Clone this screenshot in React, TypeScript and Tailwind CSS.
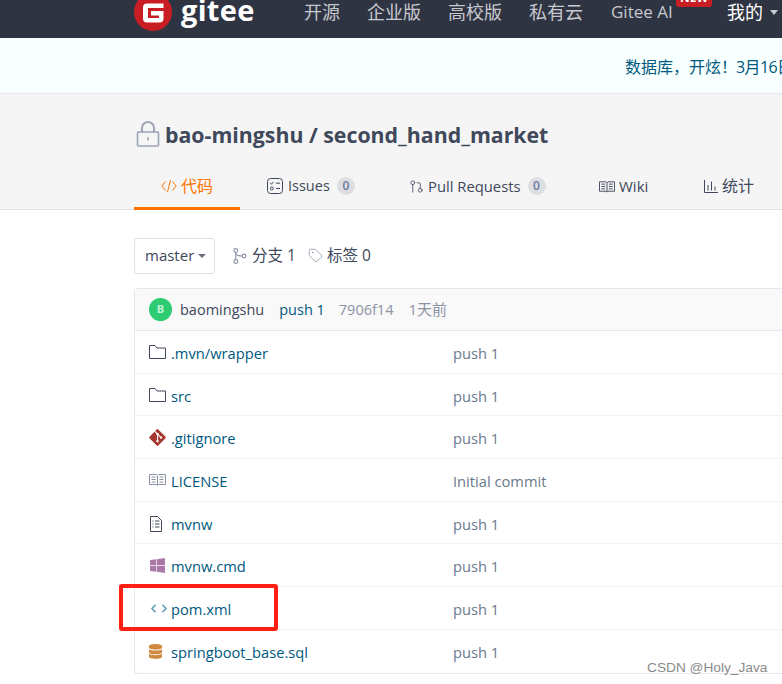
import { ChevronLeft, ChevronRight, GitPullRequest, Tag } from "lucide-react";
import { FaDatabase, FaGitAlt, FaWindows } from "react-icons/fa";
import type { ReactNode } from "react";

const FONT = "font-['Open_Sans','Noto_Sans_CJK_SC',sans-serif]";

const navItems = [
  { label: "开源", cls: "w-[63px]" },
  { label: "企业版", cls: "w-[81px]" },
  { label: "高校版", cls: "w-[81px]" },
  { label: "私有云", cls: "w-[82px]" },
];

function GiteeLogo() {
  return (
    <svg viewBox="0 0 38 38" className="w-[38px] h-[38px] shrink-0">
      <circle cx="19" cy="19" r="19" fill="#c71d23" />
      <path d="M29.5 10.5H13a4 4 0 0 0-4 4v11a4 4 0 0 0 4 4h12.5a4 4 0 0 0 4-4v-7.500H17v4.500h8v2.500H14V15h15.500z" fill="#fff" />
    </svg>
  );
}

function LockIcon() {
  return (
    <svg viewBox="0 0 24 26" className="w-[24px] h-[26px] shrink-0" fill="none" stroke="#9ba3b4" strokeWidth="1.6">
      <rect x="1.5" y="11" width="21" height="14" rx="1" fill="#f5f5f5" />
      <path d="M6 11V7a6 6 0 0 1 12 0v4" strokeWidth="2" />
      <path d="M12 16v3.5" strokeWidth="1.6" />
    </svg>
  );
}

function IssuesIcon() {
  return (
    <svg viewBox="0 0 16 16" className="w-[16px] h-[16px] shrink-0" fill="none" stroke="#40485b" strokeWidth="1">
      <rect x="0.5" y="0.5" width="15" height="15" rx="3" />
      <path d="M3.2 5l1.2 1.2L6.4 4M9 5.2h4M9 10.5h4" />
      <circle cx="4.8" cy="10.5" r="1.5" />
    </svg>
  );
}

function CodeSlash() {
  return (
    <svg viewBox="0 0 16 14" className="w-[16px] h-[14px] shrink-0" fill="none" stroke="#fe7300" strokeWidth="1">
      <path d="M4.5 2.500L0.8 7l3.700 4.500M11.500 2.500L15.200 7l-3.700 4.500M9.500 1L6.500 13" />
    </svg>
  );
}

function ListFile() {
  return (
    <svg viewBox="0 0 13 16" className="w-[13px] h-[16px]" fill="none" stroke="#40485b" strokeWidth="1">
      <path d="M1.500.5h7l4 4v11h-11z" />
      <path d="M3.500 5h1M6 5h4.500M3.500 8h1M6 8h4.500M3.500 11h1M6 11h4.500" />
    </svg>
  );
}

function FolderIcon() {
  return (
    <svg viewBox="0 0 17 14" className="w-[17px] h-[14px] -mt-[2px]" fill="none" stroke="#40485b" strokeWidth="1">
      <path d="M.5 13.500V.5h5.500l2 2.500h8.500v10.500z" />
    </svg>
  );
}

function BookIcon({ color, cls }: { color: string; cls: string }) {
  return (
    <svg viewBox="0 0 17 13" className={cls} fill="none" stroke={color} strokeWidth="1">
      <path d="M.5 1.500h7l1 1 1-1h7v10h-7l-1 1-1-1h-7zM8.500 2.500v9.500" />
      <path d="M2.500 4h4M2.500 6.500h4M2.500 9h4M10.500 4h4M10.500 6.500h4M10.500 9h4" />
    </svg>
  );
}

function BranchIcon() {
  return (
    <svg viewBox="0 0 14 16" className="w-[14px] h-[16px] ml-[18px] shrink-0" fill="none" stroke="#8c92a4" strokeWidth="1.100">
      <circle cx="2.800" cy="2.500" r="1.900" />
      <circle cx="2.800" cy="13.500" r="1.900" />
      <circle cx="11" cy="8" r="1.900" />
      <path d="M2.800 4.400v7.200M2.800 5c.5 2.500 3.500 3 6.300 3" />
    </svg>
  );
}

function ChartIcon() {
  return (
    <svg viewBox="0 0 14 14" className="w-[14px] h-[14px] shrink-0" fill="none" stroke="#40485b" strokeWidth="1">
      <path d="M.5 1v12.500H14M4 6v5.500M7.500 2.500v9M11 7.500v4" />
    </svg>
  );
}

function Tab({ icon, label, count, cls, active, labelCls }: { icon: ReactNode; label: string; count?: number; cls: string; active?: boolean; labelCls?: string }) {
  return (
    <div className={`${cls} h-[46px] flex items-center gap-[4px] shrink-0 text-[15px] ${active ? "justify-center border-b-[3px] border-[#fe7300] text-[#fe7300]" : "text-[#40485b] pb-[2px]"}`}>
      {icon}
      <span className={labelCls}>{label}</span>
      {count !== undefined && (
        <span className="ml-[3px] w-[18px] h-[18px] rounded-full bg-[#dcdee2] text-[#6a7a9c] text-[12px] font-semibold flex items-center justify-center">{count}</span>
      )}
    </div>
  );
}

const rows: { name: string; msg: string; icon: ReactNode }[] = [
  { name: ".mvn/wrapper", msg: "push 1", icon: <FolderIcon /> },
  { name: "src", msg: "push 1", icon: <FolderIcon /> },
  { name: ".gitignore", msg: "push 1", icon: <FaGitAlt size={19} color="#a5372e" className="-mt-[1px] -ml-[1px]" /> },
  { name: "LICENSE", msg: "Initial commit", icon: <BookIcon color="#8c92a4" cls="w-[17px] h-[13px] -mt-[2px]" /> },
  { name: "mvnw", msg: "push 1", icon: <ListFile /> },
  { name: "mvnw.cmd", msg: "push 1", icon: <FaWindows size={17} color="#a978a5" className="-mt-[1px]" /> },
  {
    name: "pom.xml",
    msg: "push 1",
    icon: (
      <span className="flex text-[#5f9ebd] -ml-[2px]">
        <ChevronLeft size={13} strokeWidth={3} className="-mr-[2px]" />
        <ChevronRight size={13} strokeWidth={3} />
      </span>
    ),
  },
  { name: "springboot_base.sql", msg: "push 1", icon: <FaDatabase size={15} color="#d08a3f" className="-mt-[2px] -ml-[1px]" /> },
];

export default function App() {
  return (
    <div className={`${FONT} relative w-[782px] h-[684px] overflow-hidden bg-white`}>
      {/* Top nav */}
      <header className="h-[38px] bg-[#2f3443] pb-[14px] pl-[134px] flex items-center whitespace-nowrap">
        <GiteeLogo />
        <span className="ml-[9px] w-[123px] text-[29px] font-bold text-white tracking-[0.3px] leading-none -mt-[5px]">gitee</span>
        {navItems.map((n) => (
          <span key={n.label} className={`${n.cls} shrink-0 text-[18px] text-[#c7c9ce]`}>{n.label}</span>
        ))}
        <span className="relative w-[116px] shrink-0 text-[17px] text-[#c7c9ce]">
          Gitee AI
          <span className="absolute left-[65px] -top-[13px] w-[36px] h-[21px] pt-[5px] rounded-[3px] bg-[#c71d23] text-white text-[12px] font-bold leading-[14px] text-center">NEW</span>
        </span>
        <span className="text-[18px] text-white">我的</span>
        <span className="ml-[7px] w-0 h-0 border-x-[4.5px] border-x-transparent border-t-[5px] border-t-[#c7c9ce]" />
      </header>

      {/* Announcement */}
      <div className="h-[56px] bg-[#f7ffff] border-b border-[#e3e9ed] pl-[625px] pt-[3px] flex items-center whitespace-nowrap text-[16px] text-[#005980]">
        数据库，开炫！<span className="-ml-[1px] tracking-[-0.6px]">3月16日</span>
      </div>

      {/* Repo header */}
      <section className="h-[116px] bg-[#f5f5f5] border-b border-[#dfe1e5] pl-[136px]">
        <div className="h-[70px] pt-[27px] flex items-start gap-[5px] whitespace-nowrap text-[#40485b]">
          <LockIcon />
          <span className="text-[21.3px] font-bold leading-[27px]">bao-mingshu / second_hand_market</span>
        </div>
        <nav className="flex whitespace-nowrap -ml-[2px]">
          <Tab cls="w-[106px]" active icon={<CodeSlash />} label="代码" labelCls="text-[16px]" />
          <div className="w-[27px] shrink-0" />
          <Tab cls="w-[142px]" icon={<IssuesIcon />} label="Issues" count={0} labelCls="text-[14.5px] ml-[1px]" />
          <Tab cls="w-[190px]" icon={<GitPullRequest size={15} strokeWidth={1.3} />} label="Pull Requests" count={0} labelCls="text-[14.8px]" />
          <Tab cls="w-[105px]" icon={<BookIcon color="#40485b" cls="w-[16px] h-[13px] shrink-0" />} label="Wiki" />
          <Tab cls="w-[60px]" icon={<ChartIcon />} label="统计" labelCls="text-[16px]" />
        </nav>
      </section>

      {/* Repo content */}
      <main className="pl-[134px] pt-[27px]">
        <div className="flex items-center h-[37px] whitespace-nowrap text-[15px] text-[#40485b]">
          <div className="w-[81px] h-[36px] border border-[#dce3e8] rounded-[3px] flex items-center pl-[10px] gap-[4px]">
            master
            <span className="w-0 h-0 border-x-[4px] border-x-transparent border-t-[4px] border-t-[#6a6f7c]" />
          </div>
          <BranchIcon />
          <span className="ml-[5px] text-[15.5px]">分支 1</span>
          <Tag size={15} strokeWidth={1.2} color="#8c92a4" className="ml-[12px]" />
          <span className="ml-[4px] text-[15.5px]">标签 0</span>
        </div>

        <div className="mt-[14px] border-l border-t border-b border-[#e3e9ed] rounded-l-[4px] whitespace-nowrap">
          <div className="h-[42px] bg-[#f9f9f9] border-b border-[#e3e9ed] pl-[14px] flex items-center text-[14.5px]">
            <span className="w-[23px] h-[23px] rounded-full bg-[#2ecc71] text-[#c4f2d6] text-[11px] font-bold flex items-center justify-center">B</span>
            <span className="ml-[8px] text-[#40485b]">baomingshu</span>
            <span className="ml-[15px] text-[#005980]">push 1</span>
            <span className="ml-[14px] text-[#8c92a4]">7906f14</span>
            <span className="ml-[15px] text-[#8c92a4] text-[15px]">1天前</span>
          </div>
          {rows.map((r, i) => (
            <div key={r.name} className={`h-[42.7px] pt-[2px] flex items-center text-[14.7px] ${i < rows.length - 1 ? "border-b border-[#f0f2f4]" : ""}`}>
              <span className="ml-[14px] w-[22px] flex items-center">{r.icon}</span>
              <span className="w-[282px] text-[#005980]">{r.name}</span>
              <span className="text-[#6a7a8c]">{r.msg}</span>
            </div>
          ))}
        </div>
      </main>

      {/* Screenshot annotations */}
      <div className="absolute left-[119px] top-[584px] w-[159px] h-[47px] border-[4px] border-[#ff1e12] rounded-[3px]" />
      <div className="absolute left-[647px] top-[658px] text-[13.7px] text-[#8a8a8a] font-['Liberation_Sans',sans-serif]">CSDN @Holy_Java</div>
    </div>
  );
}
